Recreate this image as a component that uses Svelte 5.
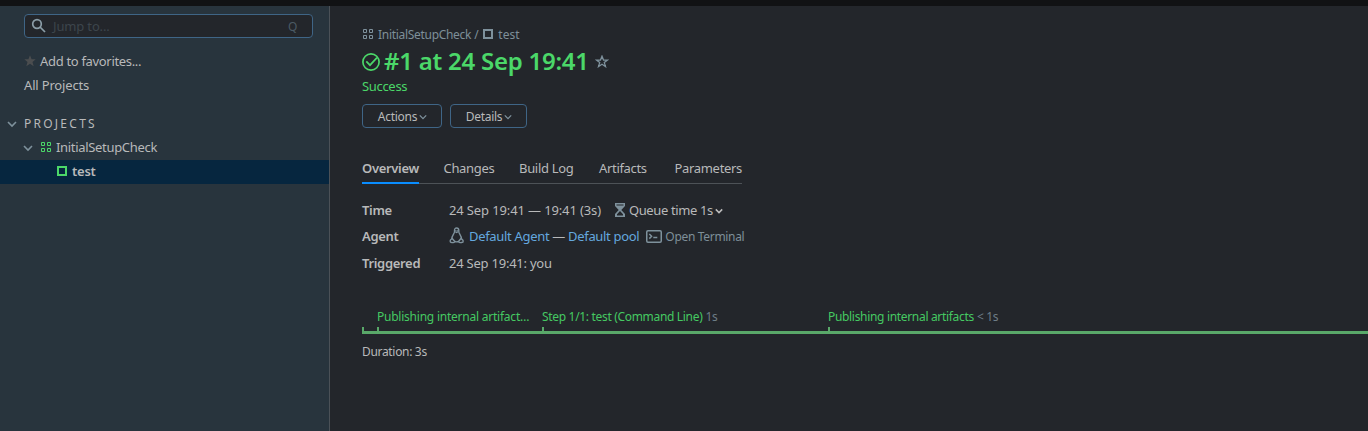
<script>
  const tabs = [
    { label: 'Overview', width: 81.500 },
    { label: 'Changes', width: 75.500 },
    { label: 'Build Log', width: 80 },
    { label: 'Artifacts', width: 75.500 },
    { label: 'Parameters', width: 67.500 }
  ];
  const stages = [
    { name: '', time: '', width: 15 },
    { name: 'Publishing internal artifact…', time: '', width: 165 },
    { name: 'Step 1/1: test (Command Line)', time: '1s', width: 286 },
    { name: 'Publishing internal artifacts', time: '< 1s', width: 540 }
  ];
</script>

{#snippet chevron(size)}
  <svg class="chevron" width={size} height={size} viewBox="0 0 10 10"><path d="M1 3l4 4 4-4" /></svg>
{/snippet}

{#snippet project()}
  <svg class="project" width="10" height="10" viewBox="0 0 10 10"><path d="M.5.5h3v3h-3zM6.500.5h3v3h-3zM.5 6.500h3v3h-3zM6.500 6.500h3v3h-3z" /></svg>
{/snippet}

<div class="page">
  <div class="topbar"></div>
  <div class="body">
    <aside>
      <div class="search">
        <svg width="16" height="16" viewBox="0 0 16 16"><circle cx="6" cy="6" r="4.300" /><path d="M9 9l5 5" /></svg>
        <span class="placeholder">Jump to...</span>
        <span class="key">Q</span>
      </div>
      <div class="row fav">
        <svg width="12" height="12" viewBox="0 0 12 12"><path d="M6 .3l1.600 4h4.100L8.500 6.900l1.200 4.300L6 8.700l-3.700 2.500 1.200-4.300L.3 4.300h4.100z" /></svg>
        <span>Add to favorites...</span>
      </div>
      <div class="row all"><span>All Projects</span></div>
      <div class="row heading">{@render chevron(10)}<span>PROJECTS</span></div>
      <div class="row parent">{@render chevron(10)}{@render project()}<span>InitialSetupCheck</span></div>
      <div class="row selected"><i class="square"></i><b>test</b></div>
    </aside>
    <main>
      <nav class="crumbs">
        {@render project()}<span class="c1">InitialSetupCheck</span><span class="slash">/</span><i class="square"></i><span class="c2">test</span>
      </nav>
      <div class="title">
        <svg class="ok" width="18" height="18" viewBox="0 0 18 18"><circle cx="9" cy="9" r="8.100" /><path d="M4.300 8.300l3.700 3.900 7-7.500" /></svg>
        <h1>#1 at 24 Sep 19:41</h1>
        <svg class="star" width="14" height="13" viewBox="0 0 14 13"><path d="M7 1.200l1.500 3.900h4.100L9.300 7.600l1.200 4L7 9.300l-3.500 2.300 1.200-4L1.400 5.100h4.100z" /></svg>
      </div>
      <div class="status">Success</div>
      <div class="buttons">
        <button class="actions"><span>Actions</span>{@render chevron(8)}</button>
        <button class="details"><span>Details</span>{@render chevron(8)}</button>
      </div>
      <div class="tabs">
        {#each tabs as tab, i}
          <div class="slot" style="width: {tab.width}px"><div class="tab" class:active={i === 0}>{tab.label}</div></div>
        {/each}
      </div>
      <dl>
        <dt>Time</dt>
        <dd>
          <span class="when">24 Sep 19:41 — 19:41 (3s)</span>
          <svg class="hourglass" width="10" height="14" viewBox="0 0 10 14"><path d="M0 0h10v3L6.300 7 10 11v3H0v-3l3.700-4L0 3z" /><path class="hole" d="M1.500 1.500h7v1h-7zM5 8l3 3.300v1.200H2v-1.200z" /></svg>
          <span class="queue">Queue time 1s</span>{@render chevron(8)}
        </dd>
        <dt>Agent</dt>
        <dd>
          <svg class="tux" width="16" height="17" viewBox="0 0 16 17">
            <path d="M5.500 5V3.500C5.500 1.800 6.300 1 7.600 1s2.200.8 2.200 2.500V5c.3 1.700 2.700 3.500 2.700 7M5.500 5c-.3 1.700-2.700 3.500-2.700 7M6 14.500c1 .5 2.300.5 3.500 0" />
            <path d="M3.200 11.500l2.600 3c-.4 1.300-2 1.400-4.300.6-.6-.9-.3-1.400-.1-2zM12 11.500l-2.500 3c.4 1.300 2 1.400 4.400.6.500-.9.200-1.400 0-2z" />
            <path d="M6.300 4.700l1.300.8 1.400-.8M6.800 3v.7M8.600 3v.7" />
          </svg>
          <span class="agent"><a href="#agent">Default Agent</a> — <a href="#pool">Default pool</a></span>
          <svg class="terminal" width="16" height="13" viewBox="0 0 16 13"><rect x=".75" y=".75" width="14.500" height="11.500" rx="1.200" /><path d="M3.300 4l2.300 2.300-2.300 2.300M7.300 7.400h4" /></svg>
          <span class="open">Open Terminal</span>
        </dd>
        <dt>Triggered</dt>
        <dd><span class="trig">24 Sep 19:41: you</span></dd>
      </dl>
      <div class="timeline">
        {#each stages as stage}
          <div class="stage" style="width: {stage.width}px">
            <span class="name" class:clipped={stage.name.endsWith('…')}>{stage.name}</span>{#if stage.time}<span class="time">{stage.time}</span>{/if}
          </div>
        {/each}
      </div>
      <div class="duration">Duration: 3s</div>
    </main>
  </div>
</div>

<style>
  :global(body) { background: #23262b; }
  .page { width: 1368px; height: 431px; overflow: hidden; display: flex; flex-direction: column; font: 13px/24px "Noto Sans", sans-serif; letter-spacing: -.32px; color: #b8b9ba; background: #23262b; white-space: nowrap; }
  .topbar { height: 6px; flex: none; background: #111214; }
  .body { display: flex; flex: 1; }
  svg { fill: none; stroke: #7e919c; flex: none; }
  .chevron { stroke-width: 1.600; }
  aside { box-sizing: border-box; width: 330px; flex: none; border-right: 1px solid #4b5157; background: #28343d; padding-top: 8px; }
  .search { box-sizing: border-box; width: 289px; height: 24px; margin: 0 0 12px 24px; border: 1px solid #3f6586; border-radius: 4px; background: #23262b; display: flex; align-items: center; padding: 0 15px 0 6px; }
  .search svg { stroke: #8b9da7; stroke-width: 1.700; }
  .placeholder { margin-left: 6px; color: #3d454c; flex: 1; letter-spacing: -.15px; }
  .key { font-size: 12px; color: #4b5a64; margin-top: 1px; }
  .row { display: flex; align-items: center; height: 24px; }
  .row span, .row b { line-height: 22px; height: 24px; }
  .fav { padding-left: 24px; gap: 4px; }
  .fav svg { fill: #4b4d4f; stroke: none; margin-bottom: 2px; }
  .all { padding-left: 24px; letter-spacing: -.32px; }
  .all span { letter-spacing: -.17px; }
  .heading { margin-top: 14px; padding-left: 7px; gap: 7px; font-size: 12px; letter-spacing: 2.250px; }
  .heading span { line-height: 24px; }
  .parent { padding-left: 23px; }
  .parent .project { margin: 0 5px 2px 8px; stroke: #4bd769; }
  .selected { background: #06263f; padding-left: 57px; gap: 5px; letter-spacing: -.25px; }
  b, dt, .active { font-weight: 600; }
  .square { box-sizing: border-box; width: 10px; height: 10px; border: 2px solid #4bd769; }
  .selected .square { margin-bottom: 2px; }
  main { flex: 1; min-width: 0; padding-left: 32px; }
  .crumbs { display: flex; align-items: center; height: 20px; margin-top: 19px; font-size: 12px; color: #7e8f99; letter-spacing: -.3px; }
  .crumbs .project { margin: 0 5px 2px 1px; }
  .slash { margin: 0 5px 0 3px; }
  .crumbs .square { border-color: #7e919c; margin: 0 5px 2px 0; }
  .c2 { letter-spacing: 0; }
  .title { display: flex; align-items: center; height: 32px; margin-top: 1px; }
  .ok { stroke: #4bd769; stroke-width: 1.700; }
  h1 { margin: -2px 6px 0 4px; font-size: 24px; line-height: 32px; font-weight: 600; letter-spacing: -.25px; color: #4bd769; }
  .star { stroke-width: 1.300; margin-bottom: 1px; }
  .status { color: #4bd769; line-height: 20px; margin-top: -2px; }
  .buttons { display: flex; gap: 8px; margin-top: 8px; }
  button { box-sizing: border-box; height: 24px; padding: 2px 0 0 1px; border: 1px solid #3f6586; border-radius: 4px; background: none; color: inherit; font: 12px/22px "Noto Sans", sans-serif; letter-spacing: -.28px; display: flex; align-items: center; justify-content: center; gap: 2px; }
  .actions { width: 80px; }
  .details { width: 77px; }
  .tabs { display: flex; width: 380px; height: 28px; margin-top: 28px; background: linear-gradient(#4d5257, #4d5257) 0 27px / 100% 1px no-repeat; }
  .slot { flex: none; }
  .tab { box-sizing: border-box; height: 28px; width: max-content; }
  .active { border-bottom: 2px solid #0a8dff; }
  dl { display: grid; grid-template-columns: 87px 1fr; grid-template-rows: 26px 27px 26px; margin: 13px 0 0; line-height: 26px; }
  dd { margin: 0; display: flex; align-items: center; }
  .when { letter-spacing: -.13px; }
  .trig { letter-spacing: -.23px; }
  .queue { letter-spacing: -.38px; }
  .hourglass { margin: 0 4px 0 14px; }
  .hourglass path { fill: #7e919c; stroke: none; }
  .hourglass .hole { fill: #23262b; }
  dd .chevron { stroke: #bcbcbc; stroke-width: 1.900; margin: 2px 0 0 2px; }
  .tux { stroke-width: 1.400; margin: -2px 4px 0 0; }
  .agent { line-height: 24px; height: 26px; }
  a { color: #64a8df; text-decoration: none; }
  .terminal { stroke-width: 1.500; margin: 0 3px 0 7px; }
  .open { font-size: 12px; color: #7e8f99; }
  .timeline { display: flex; border-bottom: 3px solid #59a869; margin-top: 31px; font-size: 12px; }
  .stage { box-sizing: border-box; flex: none; height: 24px; line-height: 20px; display: flex; background: linear-gradient(#59a869, #59a869) 0 100% / 2px 4px no-repeat; color: #45c962; }
  .clipped { letter-spacing: -.23px; }
  .time { margin-left: 3px; color: #6e7d87; }
  .duration { font-size: 12px; line-height: 20px; margin-top: 8px; }
</style>
